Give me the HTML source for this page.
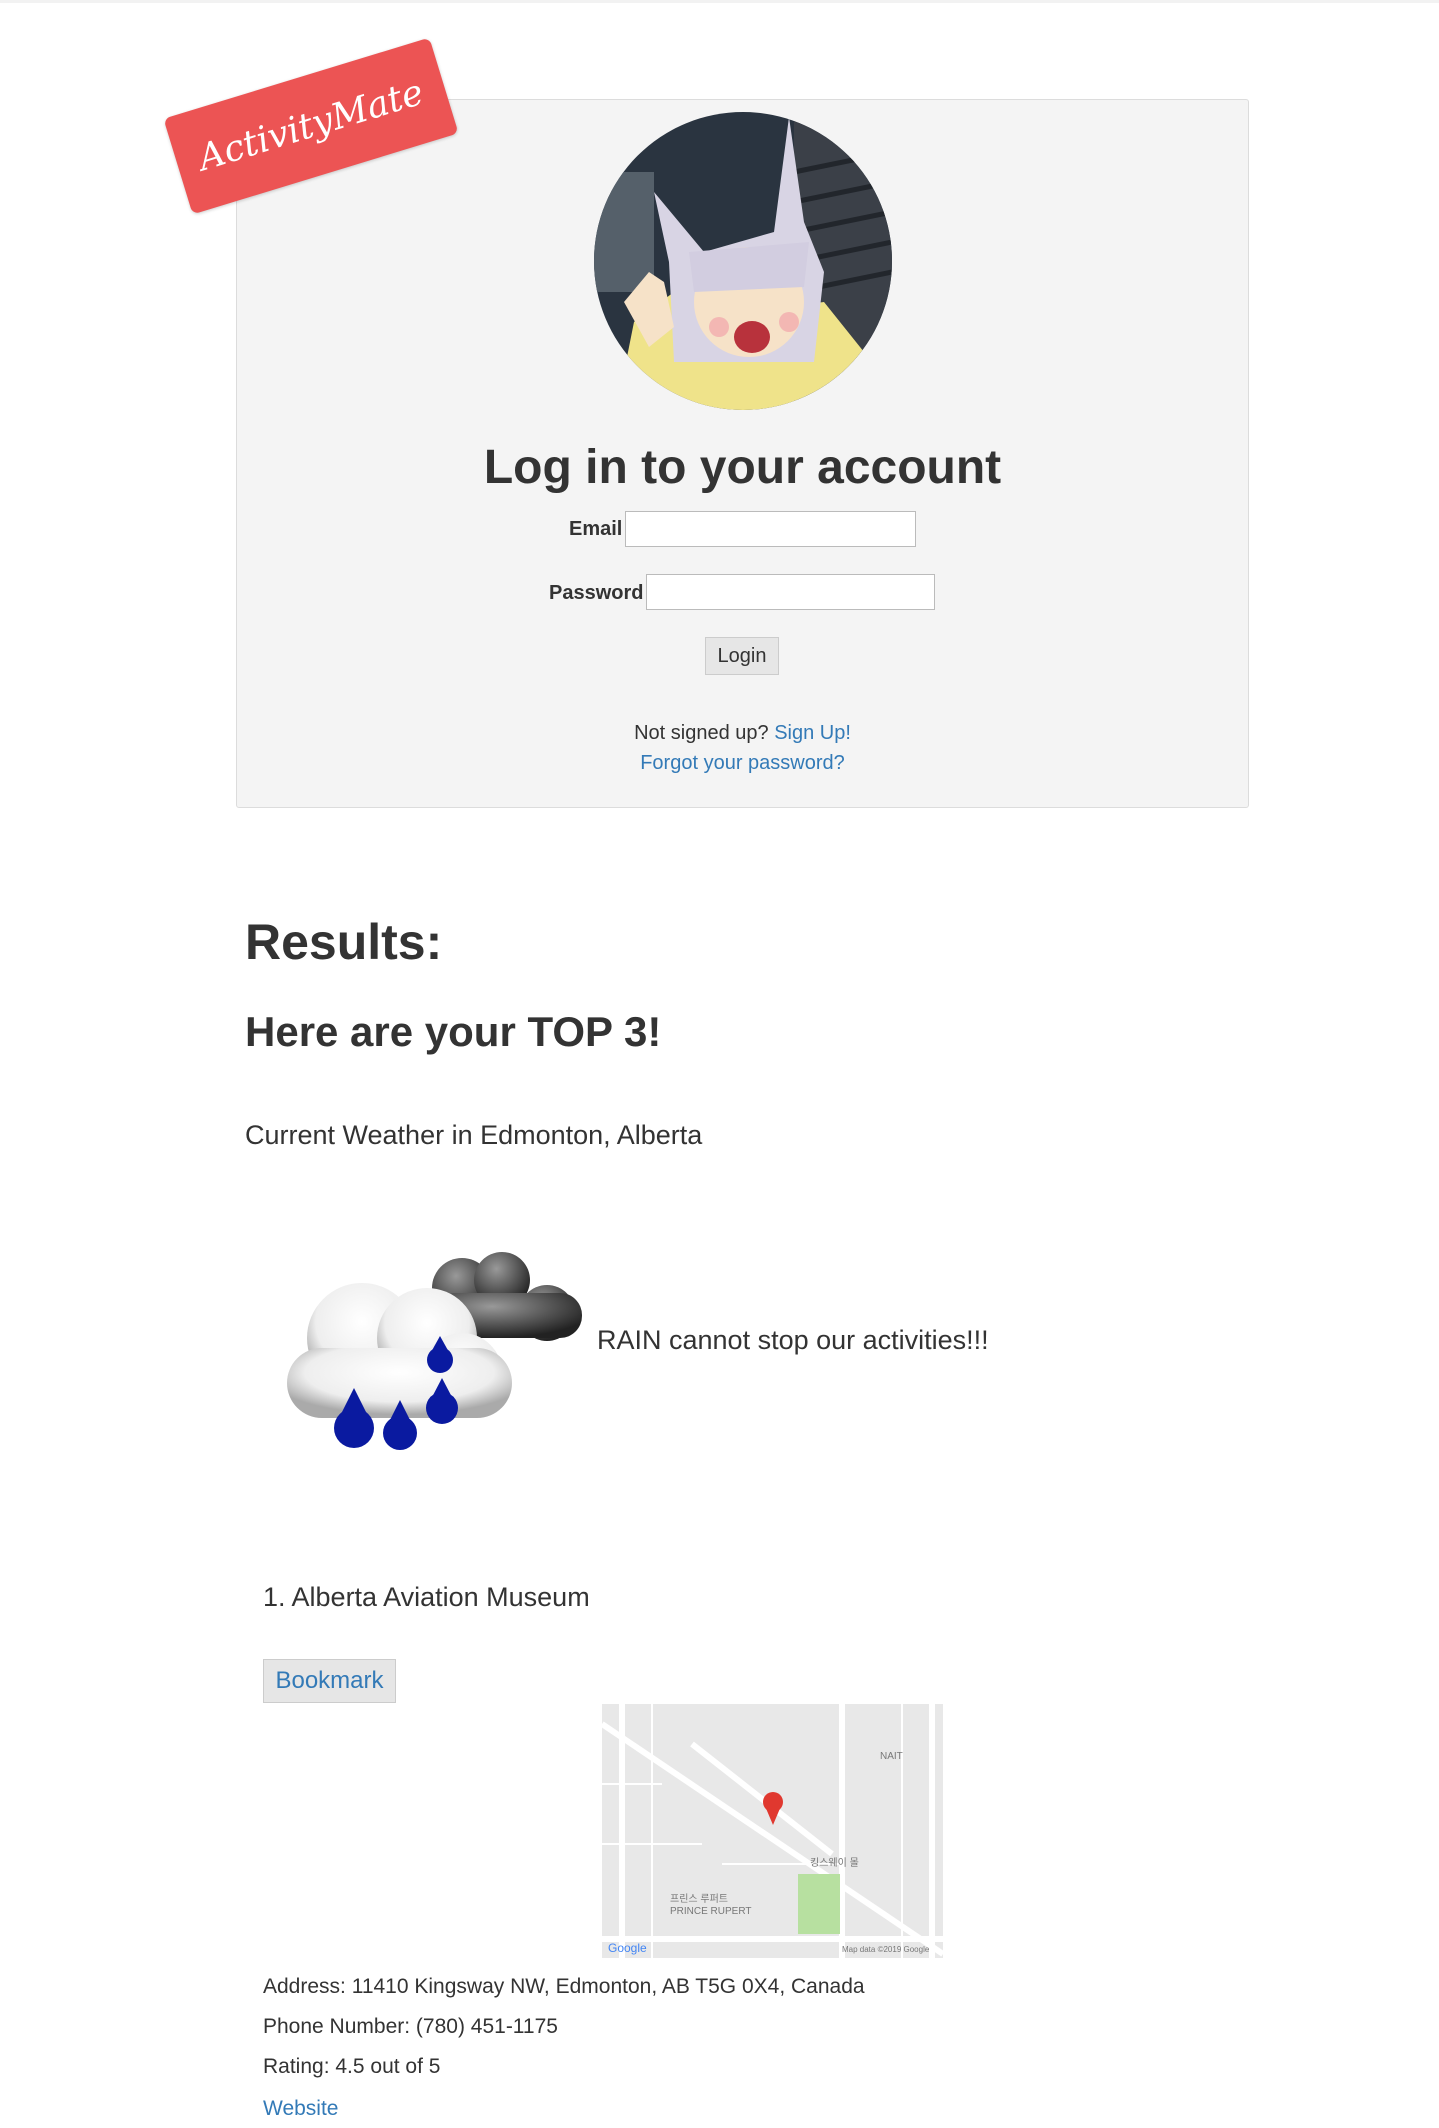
<!DOCTYPE html>
<html><head><meta charset="utf-8">
<style>
html,body{margin:0;padding:0;background:#fff;}
body{width:1439px;height:2128px;position:relative;overflow:hidden;font-family:"Liberation Sans",Arial,sans-serif;color:#333;}
.topline{position:absolute;left:0;top:0;width:1439px;height:3px;background:#f2f2f2;}
.box{position:absolute;left:236px;top:99px;width:1011px;height:707px;background:#f4f4f4;border:1px solid #dcdcdc;border-radius:3px;}
.badge{position:absolute;left:172px;top:76px;width:278px;height:100px;background:#ec5454;border-radius:7px;transform:rotate(-17deg);box-shadow:0 1px 3px rgba(0,0,0,.2);color:#fff;font-family:"DejaVu Serif","Liberation Serif",cursive;font-style:italic;font-size:36px;line-height:100px;text-align:center;z-index:3;}
.avatar{position:absolute;left:594px;top:112px;width:298px;height:298px;border-radius:50%;overflow:hidden;}
.abs{position:absolute;white-space:nowrap;}
h1{margin:0;font-weight:bold;}
input{position:absolute;height:36px;border:1px solid #bbb;background:#fff;box-sizing:border-box;}
.btn{position:absolute;background:#e6e6e6;border:1px solid #ccc;box-sizing:border-box;text-align:center;}
a{color:#337ab7;text-decoration:none;}
</style></head><body>
<div class="topline"></div>
<div class="box"></div>
<div class="badge">ActivityMate</div>
<div class="avatar">
<svg width="298" height="298" viewBox="0 0 298 298">
<rect width="298" height="298" fill="#2a3440"/>
<rect x="200" y="0" width="98" height="298" fill="#3b4048"/>
<g stroke="#22262c" stroke-width="5"><line x1="200" y1="60" x2="298" y2="40"/><line x1="200" y1="90" x2="298" y2="70"/><line x1="200" y1="120" x2="298" y2="100"/><line x1="200" y1="150" x2="298" y2="130"/><line x1="200" y1="180" x2="298" y2="160"/></g>
<rect x="0" y="60" width="60" height="120" fill="#55606a"/>
<path d="M20 310 L40 210 L80 180 L150 200 L230 190 L270 240 L290 310Z" fill="#efe38a"/>
<path d="M60 80 L110 140 L180 120 L195 5 L210 110 L230 160 L220 250 L80 250 L75 150 Z" fill="#d8d4e4"/>
<ellipse cx="155" cy="190" rx="55" ry="55" fill="#f6e2c8"/>
<path d="M95 140 L215 130 L210 175 L100 180Z" fill="#d2cde0"/>
<ellipse cx="158" cy="225" rx="18" ry="16" fill="#b8323c"/>
<circle cx="125" cy="215" r="10" fill="#f3b7b3"/><circle cx="195" cy="210" r="10" fill="#f3b7b3"/>
<path d="M30 190 L55 160 L70 170 L80 215 L55 235 Z" fill="#f6e2c8"/>
</svg></div>

<h1 class="abs" style="left:0;width:1485px;text-align:center;top:440px;font-size:48px;">Log in to your account</h1>
<div class="abs" style="left:569px;top:518px;font-size:20px;font-weight:bold;">Email</div>
<input style="left:625px;top:511px;width:291px;">
<div class="abs" style="left:549px;top:582px;font-size:20px;font-weight:bold;">Password</div>
<input style="left:646px;top:574px;width:289px;">
<div class="btn" style="left:705px;top:637px;width:74px;height:38px;line-height:36px;font-size:20px;">Login</div>
<div class="abs" style="left:0;width:1485px;text-align:center;top:722px;font-size:20px;">Not signed up? <a>Sign Up!</a></div>
<div class="abs" style="left:0;width:1485px;text-align:center;top:752px;font-size:20px;"><a>Forgot your password?</a></div>

<h1 class="abs" style="left:245px;top:913px;font-size:50px;">Results:</h1>
<h1 class="abs" style="left:245px;top:1008px;font-size:42px;">Here are your TOP 3!</h1>
<div class="abs" style="left:245px;top:1120px;font-size:27px;">Current Weather in Edmonton, Alberta</div>

<svg class="abs" style="left:282px;top:1238px;" width="310" height="212" viewBox="0 0 310 212" preserveAspectRatio="none">
<defs><radialGradient id="c" cx="50%" cy="35%" r="60%"><stop offset="0" stop-color="#fff"/><stop offset=".7" stop-color="#eee"/><stop offset="1" stop-color="#aaa"/></radialGradient>
<radialGradient id="d" cx="40%" cy="30%" r="70%"><stop offset="0" stop-color="#999"/><stop offset="1" stop-color="#222"/></radialGradient></defs>
<g fill="url(#d)"><circle cx="180" cy="50" r="30"/><circle cx="220" cy="42" r="28"/><circle cx="265" cy="75" r="28"/><rect x="150" y="55" width="150" height="45" rx="22"/></g>
<g fill="url(#c)"><circle cx="80" cy="100" r="55"/><circle cx="145" cy="100" r="50"/><circle cx="180" cy="135" r="40"/><rect x="5" y="110" width="225" height="70" rx="35"/></g>
<g fill="#0a1aa0">
<ellipse cx="118" cy="195" rx="17" ry="17"/><path d="M105 188 L118 162 L131 188Z"/>
<ellipse cx="72" cy="190" rx="20" ry="20"/><path d="M56 182 L72 150 L88 182Z"/>
<ellipse cx="160" cy="170" rx="16" ry="16"/><path d="M148 163 L160 140 L172 163Z"/>
<ellipse cx="158" cy="122" rx="13" ry="13"/><path d="M148 116 L158 98 L168 116Z"/></g>
</svg>
<div class="abs" style="left:597px;top:1325px;font-size:27px;">RAIN cannot stop our activities!!!</div>

<div class="abs" style="left:263px;top:1582px;font-size:27px;">1. Alberta Aviation Museum</div>
<div class="btn" style="left:263px;top:1659px;width:133px;height:44px;line-height:42px;font-size:24px;color:#337ab7;">Bookmark</div>

<svg class="abs" style="left:602px;top:1704px;" width="341" height="254" viewBox="0 0 341 254">
<rect width="341" height="254" fill="#e8e8e8"/>
<g stroke="#fff" stroke-width="6" fill="none"><line x1="0" y1="20" x2="341" y2="250"/><line x1="330" y1="0" x2="330" y2="254"/><line x1="20" y1="0" x2="20" y2="254"/><line x1="240" y1="0" x2="240" y2="254"/><line x1="0" y1="235" x2="341" y2="235"/><path d="M90 40 L230 150"/></g>
<g stroke="#fff" stroke-width="2"><line x1="0" y1="80" x2="60" y2="80"/><line x1="0" y1="140" x2="100" y2="140"/><line x1="50" y1="0" x2="50" y2="254"/><line x1="120" y1="160" x2="240" y2="160"/><line x1="300" y1="0" x2="300" y2="254"/></g>
<rect x="196" y="170" width="42" height="60" fill="#b7e0a0"/>
<circle cx="171" cy="98" r="10" fill="#e0382f"/><path d="M163 102 L171 121 L179 102Z" fill="#e0382f"/>
<g font-family="Liberation Sans" font-size="10" fill="#777"><text x="68" y="198">프린스 루퍼트</text><text x="68" y="210">PRINCE RUPERT</text><text x="208" y="162">킹스웨이 몰</text><text x="278" y="55">NAIT</text><text x="240" y="248" font-size="8">Map data ©2019 Google</text><text x="6" y="248" fill="#4285f4" font-size="12">Google</text></g>
</svg>

<div class="abs" style="left:263px;top:1975px;font-size:21px;">Address: 11410 Kingsway NW, Edmonton, AB T5G 0X4, Canada</div>
<div class="abs" style="left:263px;top:2015px;font-size:21px;">Phone Number: (780) 451-1175</div>
<div class="abs" style="left:263px;top:2055px;font-size:21px;">Rating: 4.5 out of 5</div>
<div class="abs" style="left:263px;top:2097px;font-size:21px;"><a>Website</a></div>
</body></html>
